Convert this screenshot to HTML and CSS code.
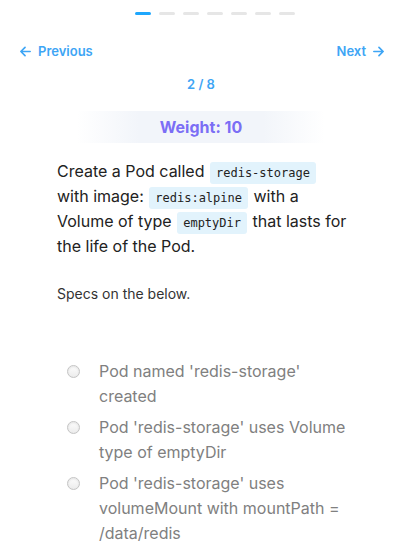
FILE: index.html
```html
<!DOCTYPE html>
<html>
<head>
<meta charset="utf-8">
<link rel="stylesheet" href="styles.css">
</head>
<body>
<div class="progress">
  <span class="dash active"></span><span class="dash"></span><span class="dash"></span><span class="dash"></span><span class="dash"></span><span class="dash"></span><span class="dash"></span>
</div>
<div class="nav">
  <a class="nav-link"><svg width="13" height="13" viewBox="0 0 14 14"><path d="M12 7H2M6.5 2.5L2 7l4.5 4.5" fill="none" stroke="currentColor" stroke-width="1.8" stroke-linecap="round" stroke-linejoin="round"/></svg><span>Previous</span></a>
  <a class="nav-link"><span>Next</span><svg width="13" height="13" viewBox="0 0 14 14"><path d="M2 7h10M7.5 2.5L12 7l-4.5 4.5" fill="none" stroke="currentColor" stroke-width="1.8" stroke-linecap="round" stroke-linejoin="round"/></svg></a>
</div>
<div class="counter">2 / 8</div>
<div class="weight">Weight: 10</div>
<p class="question">Create a Pod called <code>redis-storage</code> with image: <code>redis:alpine</code> with a Volume of type <code>emptyDir</code> that lasts for the life of the Pod.</p>
<p class="specs">Specs on the below.</p>
<ul class="checks">
  <li><span class="radio"></span><span>Pod named 'redis-storage' created</span></li>
  <li><span class="radio"></span><span>Pod 'redis-storage' uses Volume type of emptyDir</span></li>
  <li><span class="radio"></span><span>Pod 'redis-storage' uses volumeMount with mountPath = /data/redis</span></li>
</ul>
</body>
</html>
```
FILE: styles.css
```css
html, body {
  margin: 0;
  padding: 0;
  background: #fff;
  font-family: Inter, "Noto Sans", sans-serif;
}
.progress {
  display: flex;
  justify-content: center;
  gap: 8px;
  padding: 12px 0 0 28px;
  height: 3px;
}
.dash {
  width: 16px;
  height: 3px;
  border-radius: 2px;
  background: #e6e6e6;
}
.dash.active {
  background: #1ea7fd;
}
.nav {
  display: flex;
  justify-content: space-between;
  align-items: center;
  padding: 0 17px 0 19px;
  margin-top: 28px;
  height: 16px;
}
.nav-link {
  display: flex;
  align-items: center;
  gap: 6px;
  color: #3ea5f5;
  font-size: 13px;
  font-weight: 600;
}
.counter {
  text-align: center;
  color: #3ea5f5;
  font-size: 13px;
  font-weight: 600;
  margin-top: 17px;
  line-height: 16px;
}
.weight {
  width: 248px;
  margin: 19px auto 0;
  height: 32px;
  line-height: 32px;
  text-align: center;
  font-size: 16px;
  font-weight: 700;
  color: #7b6ef5;
  background: linear-gradient(90deg, rgba(242,245,250,0) 0%, #f2f5fa 25%, #f2f5fa 75%, rgba(242,245,250,0) 100%);
}
.question {
  margin: 16px 50px 0 57px;
  font-size: 16px;
  line-height: 25px;
  color: #222;
}
.question code {
  font-family: "DejaVu Sans Mono", monospace;
  font-size: 12px;
  line-height: 14px;
  background: #e2f3fc;
  border-radius: 3px;
  padding: 4px 6px;
  margin: 0 1px;
  color: #222;
}
.specs {
  margin: 26px 0 0 57px;
  font-size: 14px;
  line-height: 18px;
  color: #333;
}
.checks {
  list-style: none;
  margin: 56px 52px 0 67px;
  padding: 0;
}
.checks li {
  display: flex;
  gap: 19px;
  font-size: 16px;
  line-height: 25px;
  color: #808080;
  margin-bottom: 6px;
}
.radio {
  flex: none;
  box-sizing: border-box;
  width: 13px;
  height: 13px;
  margin-top: 6px;
  border-radius: 50%;
  border: 1px solid #c4c4c4;
  background: linear-gradient(180deg, #fdfdfd, #ececec);
  box-shadow: inset 0 1px 2px rgba(0,0,0,0.1);
}
```
